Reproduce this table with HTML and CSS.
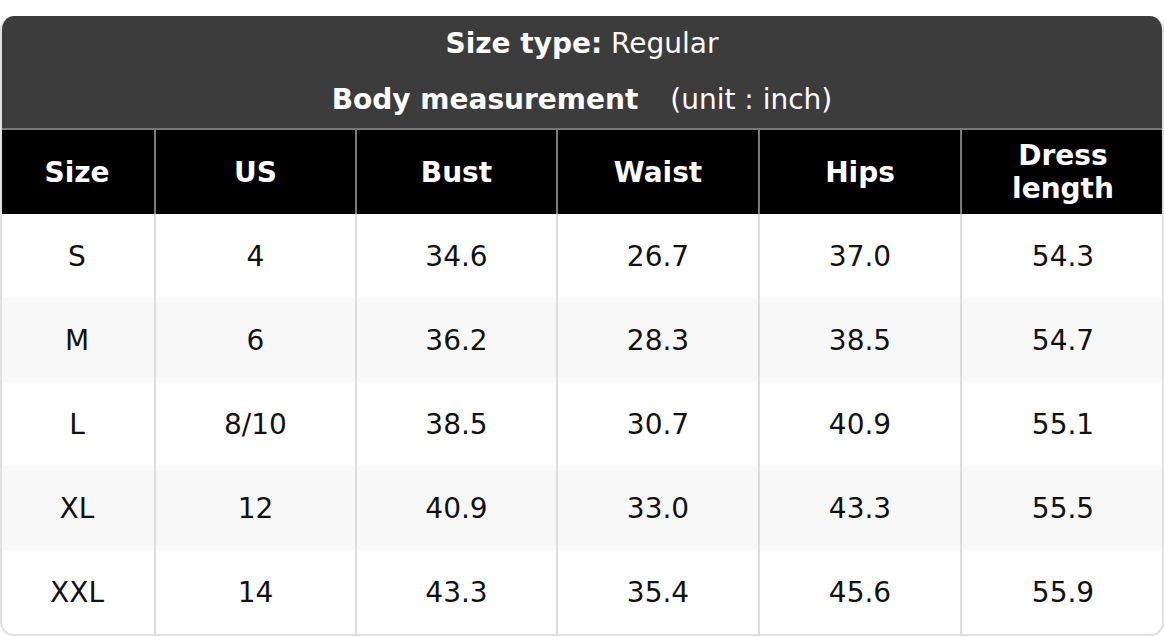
FILE: index.html
```html
<!DOCTYPE html>
<html>
<head>
<meta charset="utf-8">
<link rel="stylesheet" href="styles.css">
</head>
<body>
<div class="chart">
  <div class="caption">
    <div class="line"><b>Size type:</b> Regular</div>
    <div class="line"><b>Body measurement</b><span class="unit">(unit : inch)</span></div>
  </div>
  <table class="grid">
    <colgroup>
      <col class="c1"><col class="c2"><col class="c3"><col class="c4"><col class="c5"><col class="c6">
    </colgroup>
    <thead>
      <tr><th>Size</th><th>US</th><th>Bust</th><th>Waist</th><th>Hips</th><th>Dress<br>length</th></tr>
    </thead>
    <tbody>
      <tr><td>S</td><td>4</td><td>34.6</td><td>26.7</td><td>37.0</td><td>54.3</td></tr>
      <tr><td>M</td><td>6</td><td>36.2</td><td>28.3</td><td>38.5</td><td>54.7</td></tr>
      <tr><td>L</td><td>8/10</td><td>38.5</td><td>30.7</td><td>40.9</td><td>55.1</td></tr>
      <tr><td>XL</td><td>12</td><td>40.9</td><td>33.0</td><td>43.3</td><td>55.5</td></tr>
      <tr><td>XXL</td><td>14</td><td>43.3</td><td>35.4</td><td>45.6</td><td>55.9</td></tr>
    </tbody>
  </table>
</div>
</body>
</html>
```
FILE: styles.css
```css
html, body {
  margin: 0;
  padding: 0;
  background: #ffffff;
}
body {
  padding-top: 16px;
  font-family: "DejaVu Sans", sans-serif;
}
.chart {
  width: 1164px;
  box-sizing: border-box;
  border: 2px solid #e0e0e0;
  border-top: none;
  border-radius: 14px;
  overflow: hidden;
}
.caption {
  background: #3c3c3c;
  color: #ffffff;
  font-size: 28px;
  text-align: center;
  height: 112px;
  display: flex;
  flex-direction: column;
  justify-content: center;
  gap: 24px;
  border-bottom: 2px solid #777777;
  margin: 0 -2px;
}
.line {
  line-height: 32px;
}
.unit {
  margin-left: 32px;
}
.grid {
  width: 1164px;
  margin: 0 -2px;
  table-layout: fixed;
  border-collapse: separate;
  border-spacing: 0;
  font-size: 28px;
}
.c1 { width: 154px; }
.c2 { width: 201px; }
.c3 { width: 201px; }
.c4 { width: 202px; }
.c5 { width: 202px; }
.c6 { width: 204px; }
.grid th, .grid td {
  padding: 0;
  text-align: center;
  vertical-align: middle;
  height: 84px;
  box-sizing: border-box;
}
.grid th {
  background: #000000;
  color: #ffffff;
  font-weight: bold;
  line-height: 33px;
  border-left: 2px solid #7a7a7a;
}
.grid td {
  color: #111111;
  border-left: 2px solid #dddddd;
}
.grid th:first-child, .grid td:first-child {
  border-left: none;
}
.grid tbody tr:nth-child(even) td {
  background: #f8f8f8;
}
```
